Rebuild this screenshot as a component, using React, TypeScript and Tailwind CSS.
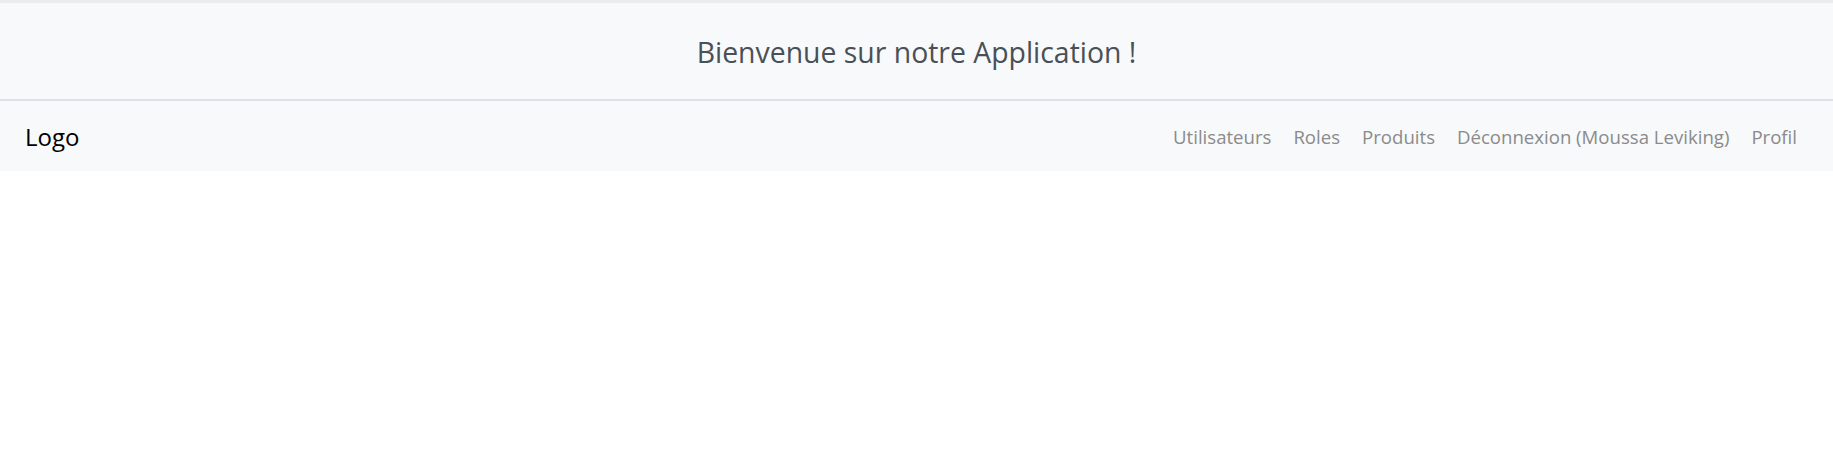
export default function App() {
  const links = ["Utilisateurs", "Roles", "Produits", "Déconnexion (Moussa Leviking)", "Profil"];

  return (
    <div className="min-h-screen bg-white font-['Open_Sans',sans-serif]">
      <div className="h-[3px] bg-[#ececec]" />
      <header className="h-[98px] flex items-center justify-center bg-[#f8f9fa] border-b-2 border-[#dee2e6] pt-[2px]">
        <h1 className="text-[28.4px] text-[#495057]">Bienvenue sur notre Application !</h1>
      </header>
      <nav className="h-[70px] flex items-center justify-between bg-[#f8f9fa] pl-[25px] pr-[25px] pt-[2px]">
        <a className="text-[24px] text-black">Logo</a>
        <ul className="flex">
          {links.map((l) => (
            <li key={l} className="px-[11px] text-[18.6px] text-[#8a8b8c]">
              {l}
            </li>
          ))}
        </ul>
      </nav>
    </div>
  );
}
